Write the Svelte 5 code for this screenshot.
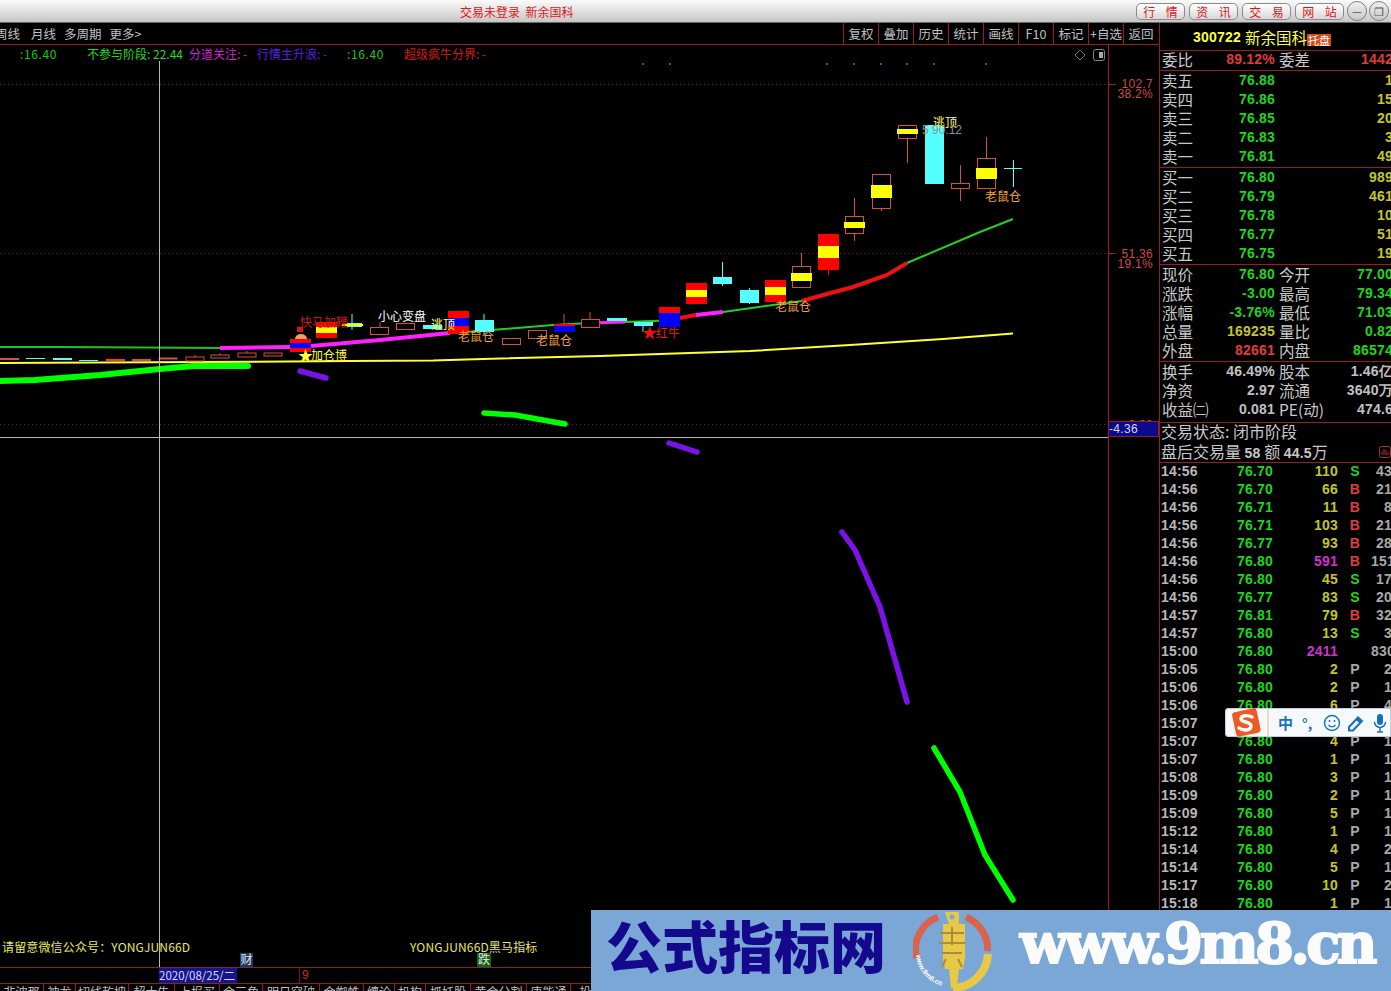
<script>
	const tools = ['复权', '叠加', '历史', '统计', '画线', 'F10', '标记', '+自选', '返回'];
	const tabs = [
		['非波那', 44], ['神龙', 32], ['切线乾坤', 53], ['超大牛', 46], ['上报买', 45], ['金三角', 43], ['明日突破', 57],
		['金蜘蛛', 44], ['缠论', 31], ['机构', 31], ['抓妖股', 45], ['黄金分割', 56], ['唐能通', 44], ['投', 30]
	];

	const sells = [['卖五', '76.88', '1'], ['卖四', '76.86', '15'], ['卖三', '76.85', '20'], ['卖二', '76.83', '3'], ['卖一', '76.81', '49']];
	const buys = [['买一', '76.80', '989'], ['买二', '76.79', '461'], ['买三', '76.78', '10'], ['买四', '76.77', '51'], ['买五', '76.75', '19']];
	const stats = [
		['现价', '76.80', 'g', '今开', '77.00', 'g'],
		['涨跌', '-3.00', 'g', '最高', '79.34', 'g'],
		['涨幅', '-3.76%', 'g', '最低', '71.03', 'g'],
		['总量', '169235', 'y', '量比', '0.82', 'g'],
		['外盘', '82661', 'r', '内盘', '86574', 'g']
	];
	const fin = [
		['换手', '46.49%', '股本', '1.46亿'],
		['净资', '2.97', '流通', '3640万'],
		['收益㈡', '0.081', 'PE(动)', '474.6']
	];
	const trades = [
		['14:56', '76.70', '110', 'S', '43'], ['14:56', '76.70', '66', 'B', '21'], ['14:56', '76.71', '11', 'B', '8'],
		['14:56', '76.71', '103', 'B', '21'], ['14:56', '76.77', '93', 'B', '28'], ['14:56', '76.80', '591', 'B', '151'],
		['14:56', '76.80', '45', 'S', '17'], ['14:56', '76.77', '83', 'S', '20'], ['14:57', '76.81', '79', 'B', '32'],
		['14:57', '76.80', '13', 'S', '3'], ['15:00', '76.80', '2411', '', '830'], ['15:05', '76.80', '2', 'P', '2'],
		['15:06', '76.80', '2', 'P', '1'], ['15:06', '76.80', '6', 'P', '4'], ['15:07', '76.80', '3', 'P', '1'],
		['15:07', '76.80', '4', 'P', '1'], ['15:07', '76.80', '1', 'P', '1'], ['15:08', '76.80', '3', 'P', '1'],
		['15:09', '76.80', '2', 'P', '1'], ['15:09', '76.80', '5', 'P', '1'], ['15:12', '76.80', '1', 'P', '1'],
		['15:14', '76.80', '4', 'P', '2'], ['15:14', '76.80', '5', 'P', '1'], ['15:17', '76.80', '10', 'P', '2'],
		['15:18', '76.80', '1', 'P', '1']
	];

	const RED = '#ff0000', YEL = '#ffff00', BLU = '#0000ff', CYA = '#54ffff', OUT = '#d2503c';

	// wicks: x, y1, y2, colour
	const wicks = [
		[352, 314, 330, CYA], [380, 322, 327, OUT], [484, 314, 334, CYA], [564, 314, 324, OUT], [590, 312, 319, OUT],
		[643, 326, 332, CYA], [722.5, 262, 286, CYA], [749.5, 288, 304, CYA], [801.5, 253, 266, OUT], [828.5, 270, 275, RED],
		[854.5, 198, 241, OUT], [881.5, 209, 211, OUT], [907.5, 139, 163, OUT], [960.5, 165, 201, OUT], [986.5, 137, 158, OUT],
		[1013.5, 160, 187, CYA], [195, 355, 357, OUT], [220, 353, 355, OUT], [247, 351, 353, OUT]
	];
	// filled blocks: x1, y1, x2, y2, colour
	const blocks = [
		[0, 358, 19, 360, OUT], [26, 358, 45, 359, CYA], [53, 358, 72, 360, CYA], [79, 360, 98, 361, CYA],
		[106, 359, 125, 361, '#f04020'], [132, 359, 151, 361, OUT],
		[290, 339, 311, 352, RED], [290, 343, 311, 348, BLU],
		[316, 322, 337, 338, RED], [316, 327, 337, 333, YEL],
		[347, 323, 362, 327, CYA], [342, 324, 363, 326, YEL],
		[423, 325, 442, 329, CYA],
		[448, 311, 469, 334, RED], [448, 318, 469, 326, BLU],
		[475, 320, 494, 332, CYA],
		[554, 324, 575, 332, RED], [554, 326, 575, 332, BLU],
		[607, 318, 627, 321, CYA], [634, 322, 653, 326, CYA],
		[659, 307, 680, 327, RED], [659, 313, 680, 327, BLU],
		[686, 283, 707, 304, RED], [686, 290, 707, 297, YEL],
		[713, 277, 732, 284, CYA], [740, 290, 759, 303, CYA],
		[765, 280, 786, 302, RED], [765, 287, 786, 295, YEL],
		[818, 234, 839, 270, RED], [818, 246, 839, 258, YEL],
		[925, 125, 944, 184, CYA],
		[1004, 168, 1022, 169, CYA]
	];
	// outlined bodies: x, y, w, h
	const hollow = [
		[159, 358, 18, 1], [186, 357, 18, 4], [211, 355, 18, 3], [238, 353, 18, 4], [264, 353, 18, 3],
		[370.5, 327.5, 18, 7], [396.5, 323.5, 18, 6], [502.5, 338.5, 18, 6], [528.5, 330.5, 18, 8], [581.5, 319.5, 18, 8],
		[792.5, 266.5, 18, 21], [845.5, 216.5, 18, 17], [872.5, 174.5, 18, 34], [898.5, 125.5, 18, 13], [951.5, 183.5, 18, 5], [977.5, 158.5, 18, 30]
	];
	const bands = [[791, 273, 812, 281], [844, 222, 865, 228], [871, 185, 892, 198], [897, 129, 918, 134], [976, 168, 997, 179]];

	// average line pieces, thin to thick
	const lines = [
		['0,347 62,347 220,348', '#22c022', 2],
		['220,348 290,347', '#ff22ff', 4],
		['311,346 380,340 450,333', '#ff22ff', 4],
		['450,333 480,331 553,325 590,323', '#22d022', 2],
		['590,323 625,322', '#ff22ff', 3],
		['625,322 680,320', '#22d022', 2],
		['680,318 696,315', '#ee1111', 4],
		['696,315 723,312', '#ff22ff', 4],
		['723,312 802,301', '#22d022', 2],
		['802,301 827,294 853,287 887,275 907,263', '#ee1111', 4],
		['907,263 980,232 1013,219', '#22d022', 2],
		['0,363 200,362 350,361 433,360.5 483,359 600,356 750,351 850,345 943,339 1013,333.5', '#ffff33', 2]
	];
	const strokes = [
		['0,381 35,380 100,375 160,369 193,366 248,366', '#00ff00', 6],
		['300,371 326,378', '#7a14e6', 5.5],
		['484,413 515,415 565,424', '#00ff00', 5.5],
		['669,443 697,452', '#7a14e6', 5.5],
		['842,532 855,550 880,607 907,702', '#7a14e6', 5.5],
		['934,748 960,792 985,855 1013,900', '#00ff00', 5.5]
	];
	const dots = [642, 669, 826, 853, 880, 906, 933, 985];
	const labels = [
		[300, 327, '快马加鞭', '#c81e14'], [378, 321, '小心变盘', '#ffffff'], [431, 329, '逃顶', '#ffff66'],
		[458, 341, '老鼠仓', '#f0a040'], [536, 345, '老鼠仓', '#f0a040'], [311, 360, '加仓博', '#ffff33'],
		[656, 338, '红牛', '#e02020'], [775, 311, '老鼠仓', '#f0a040'], [933, 127, '逃顶', '#ffff66'], [985, 201, '老鼠仓', '#f0a040']
	];
</script>

<div class="screen">
	<header class="title">
		<span class="login">交易未登录&nbsp; 新余国科</span>
		<nav class="links">
			<button>行 情</button><button>资 讯</button><button>交 易</button><button>网 站</button>
		</nav>
		<span class="round">—</span>
		<span class="round">❐</span>
	</header>

	<div class="body">
		<main class="left">
			<div class="toolbar">
				<div class="periods">
					<span>周线</span><span>月线</span><span>多周期</span><span>更多&gt;</span>
				</div>
				<div class="tools">
					{#each tools as t}<span>{t}</span>{/each}
				</div>
			</div>

			<div class="legend">
				<span class="lg a">:16.40</span>
				<span class="lg b">不参与阶段: 22.44</span>
				<span class="lg c">分道关注: -</span>
				<span class="lg d">行情主升浪: -</span>
				<span class="lg e">:16.40</span>
				<span class="lg f">超级疯牛分界: -</span>
			</div>

			<svg class="chart" viewBox="0 61 1159 906" width="1159" height="906">
				<line x1="0" y1="84.5" x2="1108" y2="84.5" class="dash" />
				<line x1="0" y1="253.5" x2="1108" y2="253.5" class="dash" />
				<line x1="0" y1="424.5" x2="1108" y2="424.5" class="dash" />
				<line x1="1108.5" y1="45" x2="1108.5" y2="967" stroke="#9a1c1c" />
				<line x1="1108" y1="84.5" x2="1116" y2="84.5" stroke="#9a1c1c" />
				<line x1="1108" y1="253.5" x2="1116" y2="253.5" stroke="#9a1c1c" />

				{#each dots as x}
					<rect {x} y="63" width="2" height="2" fill="#a020a0" />
				{/each}

				{#each lines as [points, color, w]}
					<polyline {points} fill="none" stroke={color} stroke-width={w} />
				{/each}
				{#each strokes as [points, color, w]}
					<polyline {points} fill="none" stroke={color} stroke-width={w} stroke-linecap="round" stroke-linejoin="round" />
				{/each}

				{#each wicks as [x, y1, y2, color]}
					<line x1={x} {y1} x2={x} y2={y2} stroke={color} />
				{/each}
				{#each hollow as [x, y, w, h]}
					<rect {x} {y} width={w} height={h} fill="#000" stroke={OUT} />
				{/each}
				{#each bands as [x1, y1, x2, y2]}
					<rect x={x1} y={y1} width={x2 - x1} height={y2 - y1} fill={YEL} />
				{/each}
				{#each blocks as [x1, y1, x2, y2, color]}
					<rect x={x1} y={y1} width={x2 - x1} height={y2 - y1} fill={color} />
				{/each}

				<rect x="297" y="327" width="6" height="5" fill="#e01010" />
				<path d="M295 339a6 5 0 0 1 12 0z" fill="#f0a060" />

				{#each labels as [x, y, text, color]}
					<text {x} {y} class="mark" fill={color}>{text}</text>
				{/each}
				<text x="298" y="361" class="star" fill="#ffff33">★</text>
				<text x="642" y="338" class="star" fill="#f01010">★</text>
				<text x="922" y="134" class="peak">5 90.12</text>

				<text x="1153" y="88" class="axis" text-anchor="end" fill="#d04848">102.7</text>
				<text x="1153" y="98" class="axis" text-anchor="end" fill="#d04848">38.2%</text>
				<text x="1153" y="258" class="axis" text-anchor="end" fill="#d04848">51.36</text>
				<text x="1153" y="268" class="axis" text-anchor="end" fill="#d04848">19.1%</text>
				<text x="1153" y="429" class="axis" text-anchor="end" fill="#d04848">0.00</text>

				<line x1="159.5" y1="61" x2="159.5" y2="967" stroke="#b8b8b8" />
				<line x1="0" y1="437.5" x2="1108" y2="437.5" stroke="#b8b8b8" />
				<rect x="1108.5" y="421.5" width="50" height="15" fill="#0a0a8c" stroke="#9a1c1c" />
				<text x="1109" y="433" class="axis" fill="#d8d8f0">-4.36</text>

				<path d="M1080 50l5 5-5 5-5-5z" fill="none" stroke="#777" />
				<rect x="1093.5" y="49.5" width="11" height="11" rx="2" fill="none" stroke="#888" />
				<rect x="1099" y="52" width="4" height="6" fill="#aaa" />

				<text x="2" y="952" class="note">请留意微信公众号：YONGJUN66D</text>
				<text x="410" y="952" class="note">YONGJUN66D黑马指标</text>
				<rect x="240" y="953" width="13" height="14" fill="#1a3c64" />
				<text x="240.5" y="964" class="tag">财</text>
				<rect x="477" y="953" width="14" height="14" fill="#146414" />
				<text x="478" y="964" class="tag">跌</text>
			</svg>

			<div class="daterow">
				<span class="date">2020/08/25/二</span>
				<span class="nine">9</span>
			</div>

			<div class="tabs">
				{#each tabs as [name, w]}
					<span class="tab" style="width: {w}px">{name}</span>
				{/each}
			</div>
		</main>

		<aside class="side">
			<div class="stock">
				<b>300722</b><span>新余国科</span><i>托盘</i>
			</div>
			<div class="grp one">
				<div class="row"><span class="cap">委比</span><b class="r">89.12%</b><span class="cap">委差</span><b class="r">1442</b></div>
			</div>
			<div class="grp">
				{#each sells as [n, p, v]}
					<div class="row"><span class="cap">{n}</span><b class="g">{p}</b><span></span><b class="y">{v}</b></div>
				{/each}
			</div>
			<div class="grp">
				{#each buys as [n, p, v]}
					<div class="row"><span class="cap">{n}</span><b class="g">{p}</b><span></span><b class="y">{v}</b></div>
				{/each}
			</div>
			<div class="grp">
				{#each stats as [n, v, c, n2, v2, c2]}
					<div class="row"><span class="cap">{n}</span><b class={c}>{v}</b><span class="cap">{n2}</span><b class={c2}>{v2}</b></div>
				{/each}
			</div>
			<div class="grp fin">
				{#each fin as [n, v, n2, v2]}
					<div class="row"><span class="cap">{n}</span><b class="w">{v}</b><span class="cap">{n2}</span><b class="w">{v2}</b></div>
				{/each}
			</div>
			<div class="grp status">
				<div class="state">交易状态: 闭市阶段</div>
				<div>盘后交易量 <b>58</b> 额 <b>44.5</b>万</div>
				<svg class="mini" viewBox="0 0 12 12" width="12" height="12">
					<rect x="0.5" y="0.5" width="11" height="11" rx="2" fill="none" stroke="#b03030" />
					<path d="M3 9V5M5 9V3M7 9V4M9 9V6" stroke="#b03030" />
				</svg>
			</div>
			<div class="trades">
				{#each trades as [t, p, v, f, n]}
					<div class="trade">
						<b class="t">{t}</b>
						<b class="g ra">{p}</b>
						<b class="ra" class:y={v.length < 4 && v !== '591'} class:m={v === '591' || v === '2411'}>{v}</b>
						<b class="flag" class:g={f === 'S'} class:r={f === 'B'} class:gray={f === 'P'}>{f}</b>
						<b class="gray ra">{n}</b>
					</div>
				{/each}
			</div>
		</aside>
	</div>

	<div class="ime">
		<svg class="sogou" viewBox="0 0 34 34" width="34" height="34">
			<rect x="5" y="4" width="25" height="25" rx="3" transform="rotate(-12 17 17)" fill="#ee5a24" />
			<path d="M23 11c-4-2-11-2-11 2s10 2 10 7-8 5-12 2" fill="none" stroke="#fff" stroke-width="3.4" stroke-linecap="round" />
		</svg>
		<span class="sep"></span>
		<span class="zh">中</span>
		<span class="punct">°,</span>
		<svg viewBox="0 0 18 18" width="18" height="18" class="smile">
			<circle cx="9" cy="9" r="7.5" fill="none" stroke="#1670c0" stroke-width="1.4" />
			<circle cx="6.5" cy="7" r="1" fill="#1670c0" />
			<circle cx="11.5" cy="7" r="1" fill="#1670c0" />
			<path d="M5.5 11c2 2.4 5 2.4 7 0" fill="none" stroke="#1670c0" stroke-width="1.3" />
		</svg>
		<svg viewBox="0 0 18 18" width="18" height="18" class="pen">
			<path d="M2 13L11 3.5l4 3.5-9 9.5H2z" fill="none" stroke="#1670c0" stroke-width="2" />
			<path d="M9 6l4 3.5 2-2.5-4-3.500z" fill="#1670c0" />
		</svg>
		<svg viewBox="0 0 14 20" width="14" height="20" class="mic">
			<rect x="4" y="1" width="6" height="11" rx="3" fill="#1670c0" />
			<path d="M1.500 9a5.500 5.500 0 0 0 11 0M7 15v4M4 19h6" fill="none" stroke="#1670c0" stroke-width="1.500" />
		</svg>
	</div>

	<div class="banner">
		<span class="brand">公式指标网</span>
		<svg class="logo" viewBox="0 0 80 80" width="80" height="80">
			<defs>
				<path id="ringtext" d="M3 44a35 35 0 0 0 27 31" />
			</defs>
			<path d="M3.500 47A35 35 0 0 1 25 6M53 6A35 35 0 0 1 74.500 40" fill="none" stroke="#d9634c" stroke-width="7" />
			<path d="M75 43A36 36 0 0 1 40 77" fill="none" stroke="#e8c945" stroke-width="8" />
			<text class="ringtxt"><textPath href="#ringtext">www.9m8.cn</textPath></text>
			<path d="M32 1h14v12h6v34l-2 11h-4l-2 19h-6l-2-19h-4l-2-11V13h6z" fill="#e8c945" />
			<path d="M27 22h24M26 32h26M39 16v18M29 42h20M33 48l-4 8M45 48l4 8" stroke="#b08a3c" stroke-width="2" fill="none" />
			<circle cx="39" cy="6" r="2.500" fill="#7ba7d7" />
		</svg>
		<span class="url">www.9m8.cn</span>
	</div>
</div>

<style>
	:global(body) {
		margin: 0;
		background: #000;
	}
	.screen {
		position: relative;
		width: 1391px;
		height: 991px;
		overflow: hidden;
		background: #000;
		color: #c0c0c0;
		font-family: 'Noto Sans CJK SC', 'Liberation Sans', sans-serif;
	}
	.title {
		display: flex;
		align-items: center;
		height: 23px;
		box-sizing: border-box;
		padding-left: 460px;
		background: linear-gradient(#fbfbfb, #c6c6c6);
		border-bottom: 1px solid #666;
	}
	.login {
		width: 677px;
		color: #e01818;
		font-size: 12px;
	}
	.links {
		display: flex;
		gap: 4px;
		margin-right: 3px;
	}
	.links button {
		width: 49px;
		height: 17px;
		padding: 0;
		border: 1px solid #8a8a8a;
		border-radius: 5px;
		background: linear-gradient(#fff, #d8d8d8);
		color: #d81818;
		font: 12px/15px 'Noto Sans CJK SC', sans-serif;
		word-spacing: 8px;
	}
	.round {
		display: flex;
		align-items: center;
		justify-content: center;
		flex: none;
		width: 20px;
		height: 20px;
		margin-right: 2px;
		border: 1px solid #808080;
		border-radius: 50%;
		box-sizing: border-box;
		background: linear-gradient(#eee, #c8c8c8);
		color: #555;
		font-size: 11px;
	}
	.body {
		display: flex;
		height: 968px;
	}
	.left {
		flex: none;
		width: 1159px;
		display: flex;
		flex-direction: column;
		border-right: 1px solid #9a1c1c;
	}
	.toolbar {
		display: flex;
		justify-content: space-between;
		height: 21px;
		flex: none;
		border-bottom: 1px solid #9a1c1c;
		font-size: 12.5px;
		line-height: 21px;
	}
	.periods {
		display: flex;
		gap: 8px;
		margin-left: -5px;
	}
	.periods span:first-child {
		margin-right: 3px;
	}
	.tools {
		display: flex;
		margin-right: 1px;
	}
	.tools span {
		width: 35px;
		text-align: center;
		border-left: 1px solid #9a1c1c;
		box-sizing: border-box;
	}
	.legend {
		position: relative;
		height: 16px;
		flex: none;
		font-size: 12px;
		line-height: 18px;
	}
	.lg {
		position: absolute;
		top: 0;
		white-space: nowrap;
	}
	.a { left: 20px; color: #18c818; letter-spacing: 0.6px; }
	.b { left: 87px; color: #22d822; }
	.c { left: 189px; color: #d020d0; }
	.d { left: 257px; color: #5a1ee0; }
	.e { left: 347px; color: #18c818; letter-spacing: 0.6px; }
	.f { left: 404px; color: #d81818; }
	.chart {
		display: block;
		flex: none;
		overflow: visible;
	}
	.dash {
		stroke: #7a1c1c;
		stroke-dasharray: 1 3;
	}
	.mark {
		font-size: 12px;
	}
	.star {
		font-size: 15px;
	}
	.peak {
		font: 12px 'Liberation Sans', sans-serif;
		fill: #909090;
	}
	.axis {
		font: 12px 'Liberation Sans', sans-serif;
		letter-spacing: 0.3px;
	}
	.note {
		font-size: 12px;
		letter-spacing: 0.15px;
		fill: #e8e860;
	}
	.tag {
		font-size: 12px;
		fill: #e0e8f0;
	}
	.daterow {
		display: flex;
		height: 15px;
		flex: none;
		border-top: 1px solid #9a1c1c;
		border-bottom: 1px solid #9a1c1c;
		font: 12px/15px 'Liberation Sans', sans-serif;
	}
	.date {
		width: 78px;
		margin-left: 159px;
		background: #16168c;
		color: #d8d8f8;
		font-family: 'Noto Sans CJK SC', sans-serif;
		font-size: 11.5px;
		white-space: nowrap;
		overflow: hidden;
	}
	.nine {
		margin-left: 62px;
		padding-left: 2px;
		border-left: 1px solid #7a1c1c;
		color: #c03030;
	}
	.tabs {
		display: flex;
		height: 8px;
		overflow: hidden;
		font-size: 12px;
		line-height: 16px;
	}
	.tab {
		flex: none;
		box-sizing: border-box;
		text-align: center;
		white-space: nowrap;
		border-right: 1px solid #9a1c1c;
	}
	.side {
		position: relative;
		flex: none;
		width: 231px;
		overflow: hidden;
		font-size: 14px;
	}
	.stock {
		display: flex;
		align-items: flex-end;
		height: 28px;
		box-sizing: border-box;
		padding: 0 0 2px 33px;
		border-bottom: 1px solid #9a1c1c;
		color: #ffff3c;
		font-size: 15.5px;
		line-height: 22px;
	}
	.stock b {
		margin-right: 4px;
		font: bold 14px/22px 'Liberation Sans', sans-serif;
	}
	.stock i {
		margin: 0 0 2px 0;
		padding: 0 1px;
		height: 12px;
		background: #d84818;
		color: #fff;
		font: normal 11px/12px 'Noto Sans CJK SC', sans-serif;
	}
	.grp {
		padding-top: 1px;
		border-bottom: 1px solid #9a1c1c;
	}
	.one {
		padding: 0;
		height: 19px;
	}
	.fin {
		height: 59px;
	}
	.row {
		display: grid;
		grid-template-columns: 34px 78px 36px 1fr;
		height: 19px;
		padding-left: 2px;
		line-height: 17px;
		white-space: nowrap;
	}
	.row b {
		text-align: right;
		margin-right: -1px;
	}
	.row b:nth-child(4) {
		margin-right: -2px;
	}
	.cap {
		color: #c8c8c8;
		font-size: 15.5px;
	}
	.row .cap:nth-child(3) {
		padding-left: 5px;
	}
	b {
		font-family: 'Liberation Sans', sans-serif;
		font-weight: bold;
		letter-spacing: 0.2px;
	}
	.g { color: #1ed41e; }
	.y { color: #c4c42c; }
	.r { color: #e03c3c; }
	.w { color: #c0c0c0; }
	.t { color: #b8b8b8; }
	.m { color: #d030d0; }
	.gray { color: #a8a8a8; }
	.status {
		position: relative;
		display: flex;
		flex-direction: column;
		height: 39px;
		padding: 0 0 0 1px;
		font-size: 16px;
		line-height: 20px;
		color: #c8c8c8;
		white-space: nowrap;
	}
	.state {
		margin-top: -2px;
	}
	.status b {
		font-size: 14px;
	}
	.mini {
		position: absolute;
		right: 0;
		top: 23px;
	}
	.trades {
		margin-top: -1px;
	}
	.trade {
		display: grid;
		grid-template-columns: 37px 76px 65px 33px 1fr;
		height: 18px;
		line-height: 18px;
		white-space: nowrap;
	}
	.trade b:first-child {
		padding-left: 1px;
	}
	.ra {
		text-align: right;
	}
	.trade b:last-child {
		margin-right: -1px;
	}
	.flag {
		text-align: center;
		padding-left: 1px;
	}
	.ime {
		position: absolute;
		left: 1225px;
		top: 708px;
		width: 166px;
		height: 29px;
		display: flex;
		align-items: center;
		box-sizing: border-box;
		background: #f6f9fc;
		border: 1px solid #bcd0e4;
		border-radius: 3px 0 0 3px;
	}
	.sogou {
		margin: 0 4px 0 3px;
		flex: none;
	}
	.sep {
		flex: none;
		width: 1px;
		height: 100%;
		border-right: 1px solid #f0d8c8;
		background: #f0d8c8;
	}
	.zh {
		margin-left: 9px;
		color: #1670c0;
		font-size: 15px;
		font-weight: bold;
		line-height: 1;
	}
	.punct {
		margin-left: 9px;
		color: #1670c0;
		font-size: 14px;
		font-weight: bold;
		line-height: 1;
	}
	.smile {
		margin-left: 11px;
		flex: none;
	}
	.pen {
		margin-left: 6px;
		flex: none;
	}
	.mic {
		margin-left: 8px;
		flex: none;
	}
	.banner {
		position: absolute;
		left: 591px;
		top: 910px;
		width: 800px;
		height: 81px;
		display: flex;
		align-items: center;
		background: #7ba7d7;
	}
	.brand {
		margin: 0 0 14px 15px;
		color: #14088c;
		font-size: 56px;
		font-weight: 900;
		line-height: 1;
		white-space: nowrap;
	}
	.logo {
		margin-left: 27px;
		flex: none;
	}
	.url {
		margin: 0 0 16px 27px;
		color: #fbfbfb;
		font-family: 'DejaVu Serif', serif;
		font-size: 56px;
		font-weight: bold;
		line-height: 1;
		letter-spacing: -3.6px;
		white-space: nowrap;
		-webkit-text-stroke: 2px #fbfbfb;
	}
	.ringtxt {
		font: bold 7px 'Liberation Sans', sans-serif;
		fill: #fff;
	}
</style>
